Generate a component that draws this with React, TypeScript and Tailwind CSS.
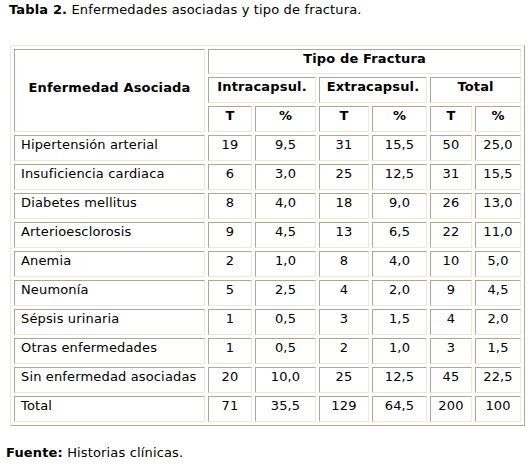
import React from 'react';

type Row = [string, string, string, string, string, string, string];

const ROWS: Row[] = [
  ['Hipertensión arterial', '19', '9,5', '31', '15,5', '50', '25,0'],
  ['Insuficiencia cardiaca', '6', '3,0', '25', '12,5', '31', '15,5'],
  ['Diabetes mellitus', '8', '4,0', '18', '9,0', '26', '13,0'],
  ['Arterioesclorosis', '9', '4,5', '13', '6,5', '22', '11,0'],
  ['Anemia', '2', '1,0', '8', '4,0', '10', '5,0'],
  ['Neumonía', '5', '2,5', '4', '2,0', '9', '4,5'],
  ['Sépsis urinaria', '1', '0,5', '3', '1,5', '4', '2,0'],
  ['Otras enfermedades', '1', '0,5', '2', '1,0', '3', '1,5'],
  ['Sin enfermedad asociadas', '20', '10,0', '25', '12,5', '45', '22,5'],
  ['Total', '71', '35,5', '129', '64,5', '200', '100'],
];

// inset look of the old border=1 tables
const cell =
  'border border-t-[#aca899] border-l-[#aca899] border-r-[#ece9d8] border-b-[#ece9d8] p-0 pt-[1px] align-top';

export default function App() {
  return (
    <div className="min-h-[465px] bg-white font-['DejaVu_Sans',Verdana,sans-serif] text-[13px] leading-[16px] tracking-[0.15px] text-black">
      <p className="pt-[2px] pl-[9px]">
        <b>Tabla 2.</b> Enfermedades asociadas y tipo de fractura.
      </p>

      <table className="mt-[27px] ml-[10px] w-[515px] table-fixed border-separate border-spacing-[3px] border border-t-[#ece9d8] border-l-[#ece9d8] border-r-[#aca899] border-b-[#aca899]">
        <colgroup>
          <col className="w-[191px]" />
          <col className="w-[44px]" />
          <col className="w-[61px]" />
          <col className="w-[50px]" />
          <col className="w-[55px]" />
          <col className="w-[42px]" />
          <col className="w-[46px]" />
        </colgroup>
        <thead>
          <tr className="h-[25px]">
            <th rowSpan={3} className={`${cell} !align-middle pb-[7px] text-center font-bold`}>
              Enfermedad Asociada
            </th>
            <th colSpan={6} className={`${cell} text-center font-bold`}>
              Tipo de Fractura
            </th>
          </tr>
          <tr className="h-[26px]">
            <th colSpan={2} className={`${cell} text-center font-bold`}>Intracapsul.</th>
            <th colSpan={2} className={`${cell} text-center font-bold`}>Extracapsul.</th>
            <th colSpan={2} className={`${cell} text-center font-bold`}>Total</th>
          </tr>
          <tr className="h-[26px]">
            {['T', '%', 'T', '%', 'T', '%'].map((h, i) => (
              <th key={i} className={`${cell} text-center font-bold`}>
                {h}
              </th>
            ))}
          </tr>
        </thead>
        <tbody>
          {ROWS.map((r) => (
            <tr key={r[0]} className="h-[26px]">
              <td className={`${cell} px-[6px] text-left whitespace-nowrap`}>{r[0]}</td>
              {r.slice(1).map((v, i) => (
                <td key={i} className={`${cell} text-center`}>
                  {v}
                </td>
              ))}
            </tr>
          ))}
        </tbody>
      </table>

      <p className="mt-[19px] pl-[6px]">
        <b>Fuente:</b> Historias clínicas.
      </p>
    </div>
  );
}
